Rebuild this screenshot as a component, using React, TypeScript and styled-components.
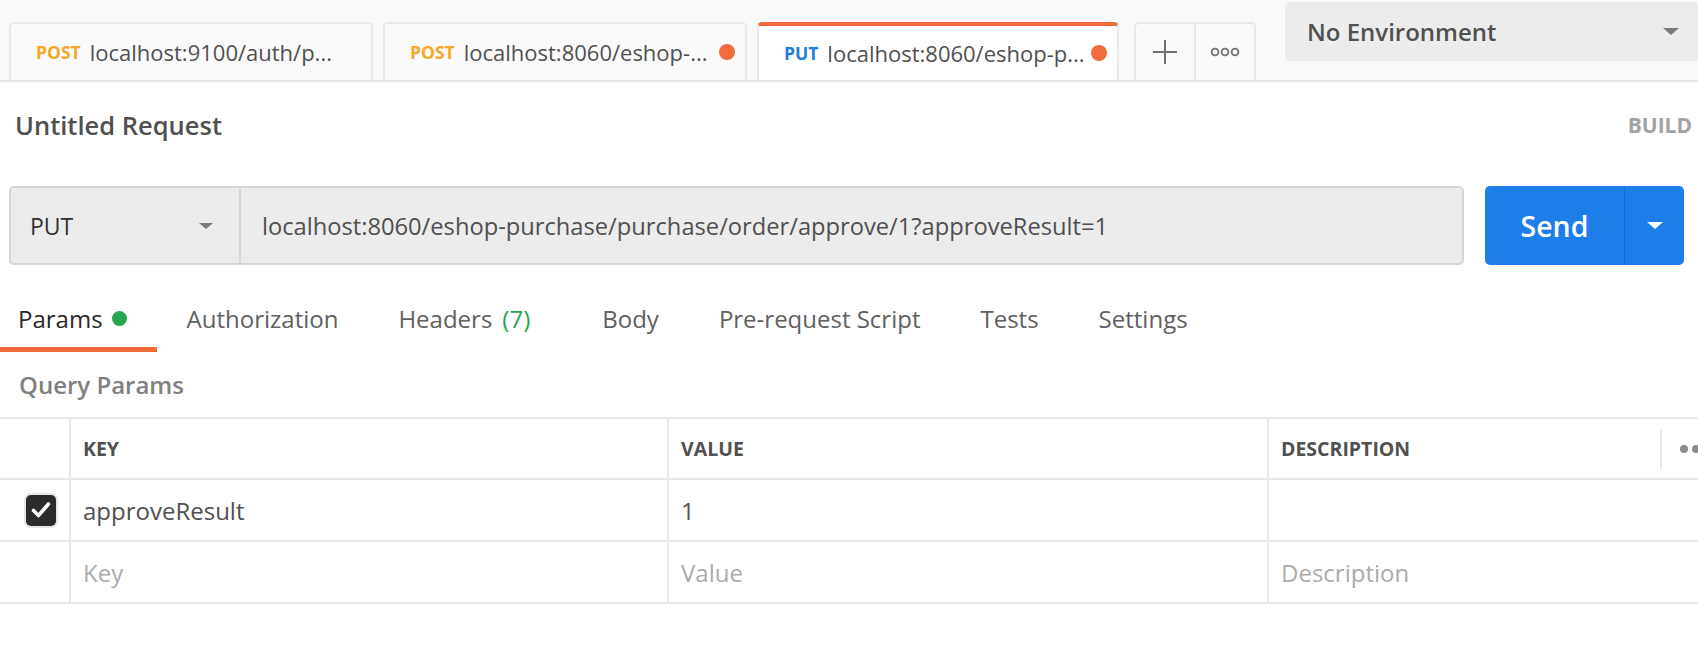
import styled, {createGlobalStyle} from "styled-components";

const GlobalStyle = createGlobalStyle`
  html, body {
    margin: 0;
    padding: 0;
    background: #ffffff;
  }

  body {
    font-family: "Open Sans", "Liberation Sans", sans-serif;
    color: #505050;
  }
`

const ORANGE = "#f26b3a";
const GREEN = "#26a54f";
const LINE = "#e8e8e8";

const METHOD_COLORS: Record<string, string> = {
  POST: "#f5a827",
  PUT: "#1c7de0",
}

const Page = styled.div`
  width: 1698px;
  height: 666px;
  overflow: hidden;
  background: #fff;
`

const TopBar = styled.header`
  display: flex;
  height: 80px;
  background: #f9f9f9;
  border-bottom: 2px solid ${LINE};
`

const Tabs = styled.div`
  display: flex;
  align-items: flex-end;
  gap: 10px;
  padding-left: 9px;
`

const Tab = styled.div<{ active?: boolean }>`
  box-sizing: border-box;
  display: flex;
  align-items: center;
  width: ${props => props.active ? 362 : 364}px;
  height: 58px;
  padding: 0 10px 0 ${props => props.active ? 25 : 25}px;
  background: ${props => props.active ? "#ffffff" : "#fafafa"};
  border: 2px solid ${LINE};
  border-bottom: none;
  border-top: ${props => props.active ? `4px solid ${ORANGE}` : `2px solid ${LINE}`};
  border-radius: 5px 5px 0 0;
`

const Method = styled.span<{ color: string }>`
  font-size: 17.5px;
  font-weight: 700;
  color: ${props => props.color};
  margin-right: 9px;
`

const TabTitle = styled.span`
  flex: 1;
  font-size: 22px;
  color: #505050;
  white-space: nowrap;
`

const UnsavedDot = styled.span`
  width: 16px;
  height: 16px;
  border-radius: 50%;
  background: ${ORANGE};
`

const TabActions = styled.div`
  box-sizing: border-box;
  display: flex;
  align-self: flex-end;
  height: 58px;
  margin-left: 15px;
  border: 2px solid ${LINE};
  border-bottom: none;
  border-radius: 5px 5px 0 0;
  background: #fafafa;
`

const ActionCell = styled.div<{ divider?: boolean }>`
  display: flex;
  align-items: center;
  justify-content: center;
  width: 58px;
  border-left: ${props => props.divider ? `2px solid ${LINE}` : "none"};
  color: #707070;
`

const Separator = styled.div`
  width: 2px;
  background: ${LINE};
  margin-left: 11px;
`

const EnvSelect = styled.div`
  box-sizing: border-box;
  display: flex;
  align-items: center;
  justify-content: space-between;
  width: 416px;
  height: 59px;
  margin: 2px 0 0 18px;
  padding: 0 22px 0 22px;
  background: #ececec;
  border-radius: 5px;
  font-size: 24px;
  font-weight: 600;
  color: #505050;
  flex-shrink: 0;
`

const Caret = styled.span<{ color: string, size: number }>`
  width: 0;
  height: 0;
  border-left: ${props => props.size}px solid transparent;
  border-right: ${props => props.size}px solid transparent;
  border-top: ${props => Math.round(props.size * 0.85)}px solid ${props => props.color};
`

const TitleRow = styled.div`
  display: flex;
  align-items: center;
  justify-content: space-between;
  height: 86px;
  padding: 0 6px 0 15px;
`

const RequestName = styled.h1`
  margin: 0;
  font-size: 25.5px;
  font-weight: 600;
  color: #505050;
`

const BuildLabel = styled.span`
  font-size: 21px;
  font-weight: 700;
  color: #a3a3a3;
`

const UrlRow = styled.div`
  display: flex;
  gap: 21px;
  height: 79px;
  margin-top: 18px;
  padding: 0 14px 0 9px;
`

const UrlBar = styled.div`
  box-sizing: border-box;
  flex: 1;
  display: flex;
  background: #ececec;
  border: 2px solid #d6d6d6;
  border-radius: 5px;
`

const MethodSelect = styled.div`
  box-sizing: border-box;
  display: flex;
  align-items: center;
  justify-content: space-between;
  width: 230px;
  padding: 0 26px 0 19px;
  border-right: 2px solid #d6d6d6;
  font-size: 23px;
  color: #333;
`

const UrlText = styled.div`
  display: flex;
  align-items: center;
  padding-left: 21px;
  font-size: 23.7px;
  color: #505050;
`

const SendButton = styled.div`
  display: flex;
  width: 199px;
  border-radius: 5px;
  overflow: hidden;
  background: #1d7ee9;
  color: #fff;
`

const SendLabel = styled.div`
  display: flex;
  align-items: center;
  justify-content: center;
  width: 139px;
  font-size: 28.5px;
  font-weight: 600;
`

const SendMore = styled.div`
  display: flex;
  align-items: center;
  justify-content: center;
  flex: 1;
  border-left: 1px solid #1a6ccc;
`

const EditorTabs = styled.nav`
  display: flex;
  margin-top: 23px;
`

const EditorTab = styled.div<{ active?: boolean, first?: boolean }>`
  box-sizing: border-box;
  display: flex;
  align-items: center;
  height: 64px;
  padding: 1px 30px 0 ${props => props.first ? 18 : 30}px;
  border-bottom: 5px solid ${props => props.active ? ORANGE : "transparent"};
  font-size: 24px;
  color: ${props => props.active ? "#282828" : "#606060"};
`

const GreenDot = styled.span`
  width: 15px;
  height: 15px;
  margin-left: 9px;
  border-radius: 50%;
  background: ${GREEN};
`

const Count = styled.span`
  margin: 0 12px 0 10px;
  color: ${GREEN};
`

const SectionLabel = styled.div`
  display: flex;
  align-items: center;
  height: 65px;
  padding-left: 19px;
  font-size: 24px;
  font-weight: 600;
  color: #808080;
`

const Table = styled.div`
  border-top: 2px solid ${LINE};
`

const Row = styled.div<{ header?: boolean }>`
  display: grid;
  grid-template-columns: 69px 598px 600px 1fr;
  height: ${props => props.header ? 59 : 60}px;
  border-bottom: 2px solid ${LINE};
`

const Cell = styled.div<{ divider?: boolean, muted?: boolean }>`
  display: flex;
  align-items: center;
  padding-left: 12px;
  border-left: ${props => props.divider ? `2px solid ${LINE}` : "none"};
  font-size: 24px;
  color: ${props => props.muted ? "#ababab" : "#505050"};
`

const HeadCell = styled(Cell)`
  font-size: 19.5px;
  font-weight: 700;
  color: #505050;
`

const CheckCell = styled.div`
  display: flex;
  align-items: center;
  padding-left: 26px;
`

const Checkbox = styled.span`
  display: flex;
  align-items: center;
  justify-content: center;
  width: 30px;
  height: 31px;
  border-radius: 5px;
  background: #2b2b2b;
  box-shadow: 0 0 0 2px #e6e6e6;
`

const HeadLabel = styled.span`
  flex: 1;
`

const BulkDivider = styled.span`
  width: 2px;
  height: 40px;
  background: ${LINE};
`

const BulkDots = styled.span`
  display: flex;
  gap: 4px;
  margin-left: 18px;
  margin-right: -14px;

  & > i {
    width: 8px;
    height: 8px;
    border-radius: 50%;
    background: #8a8a8a;
  }
`

type RequestTab = {
  method: string,
  title: string,
  dirty?: boolean,
  active?: boolean,
}

const requestTabs: RequestTab[] = [
  {method: "POST", title: "localhost:9100/auth/p..."},
  {method: "POST", title: "localhost:8060/eshop-...", dirty: true},
  {method: "PUT", title: "localhost:8060/eshop-p...", dirty: true, active: true},
]

function PlusIcon() {
  return <svg width="26" height="26" viewBox="0 0 26 26">
    <path d="M13 1v24M1 13h24" stroke="#707070" strokeWidth="2" fill="none"/>
  </svg>
}

function MoreIcon() {
  return <svg width="30" height="10" viewBox="0 0 30 10">
    {[5, 15, 25].map(cx => <circle key={cx} cx={cx} cy="5" r="3.4" stroke="#707070" strokeWidth="1.8" fill="none"/>)}
  </svg>
}

function CheckIcon() {
  return <svg width="22" height="20" viewBox="0 0 22 20">
    <path d="M3.5 10.5l5 5L18.5 4" stroke="#fff" strokeWidth="3.6" fill="none" strokeLinecap="round" strokeLinejoin="round"/>
  </svg>
}

export default function App() {
  return <Page>
    <GlobalStyle/>
    <TopBar>
      <Tabs>
        {requestTabs.map(tab => <Tab key={tab.title + tab.method} active={tab.active}>
          <Method color={METHOD_COLORS[tab.method]}>{tab.method}</Method>
          <TabTitle>{tab.title}</TabTitle>
          {tab.dirty && <UnsavedDot/>}
        </Tab>)}
      </Tabs>
      <TabActions>
        <ActionCell><PlusIcon/></ActionCell>
        <ActionCell divider><MoreIcon/></ActionCell>
      </TabActions>
      <Separator/>
      <EnvSelect>
        No Environment
        <Caret color="#7a7a7a" size={8}/>
      </EnvSelect>
    </TopBar>

    <TitleRow>
      <RequestName>Untitled Request</RequestName>
      <BuildLabel>BUILD</BuildLabel>
    </TitleRow>

    <UrlRow>
      <UrlBar>
        <MethodSelect>
          PUT
          <Caret color="#7a7a7a" size={7}/>
        </MethodSelect>
        <UrlText>localhost:8060/eshop-purchase/purchase/order/approve/1?approveResult=1</UrlText>
      </UrlBar>
      <SendButton>
        <SendLabel>Send</SendLabel>
        <SendMore><Caret color="#ffffff" size={8}/></SendMore>
      </SendButton>
    </UrlRow>

    <EditorTabs>
      <EditorTab first active>Params<GreenDot/></EditorTab>
      <EditorTab>Authorization</EditorTab>
      <EditorTab>Headers<Count>(7)</Count></EditorTab>
      <EditorTab>Body</EditorTab>
      <EditorTab>Pre-request Script</EditorTab>
      <EditorTab>Tests</EditorTab>
      <EditorTab>Settings</EditorTab>
    </EditorTabs>

    <SectionLabel>Query Params</SectionLabel>

    <Table>
      <Row header>
        <CheckCell/>
        <HeadCell divider>KEY</HeadCell>
        <HeadCell divider>VALUE</HeadCell>
        <HeadCell divider>
          <HeadLabel>DESCRIPTION</HeadLabel>
          <BulkDivider/>
          <BulkDots><i/><i/><i/></BulkDots>
        </HeadCell>
      </Row>
      <Row>
        <CheckCell><Checkbox><CheckIcon/></Checkbox></CheckCell>
        <Cell divider>approveResult</Cell>
        <Cell divider>1</Cell>
        <Cell divider/>
      </Row>
      <Row>
        <CheckCell/>
        <Cell divider muted>Key</Cell>
        <Cell divider muted>Value</Cell>
        <Cell divider muted>Description</Cell>
      </Row>
    </Table>
  </Page>
}
